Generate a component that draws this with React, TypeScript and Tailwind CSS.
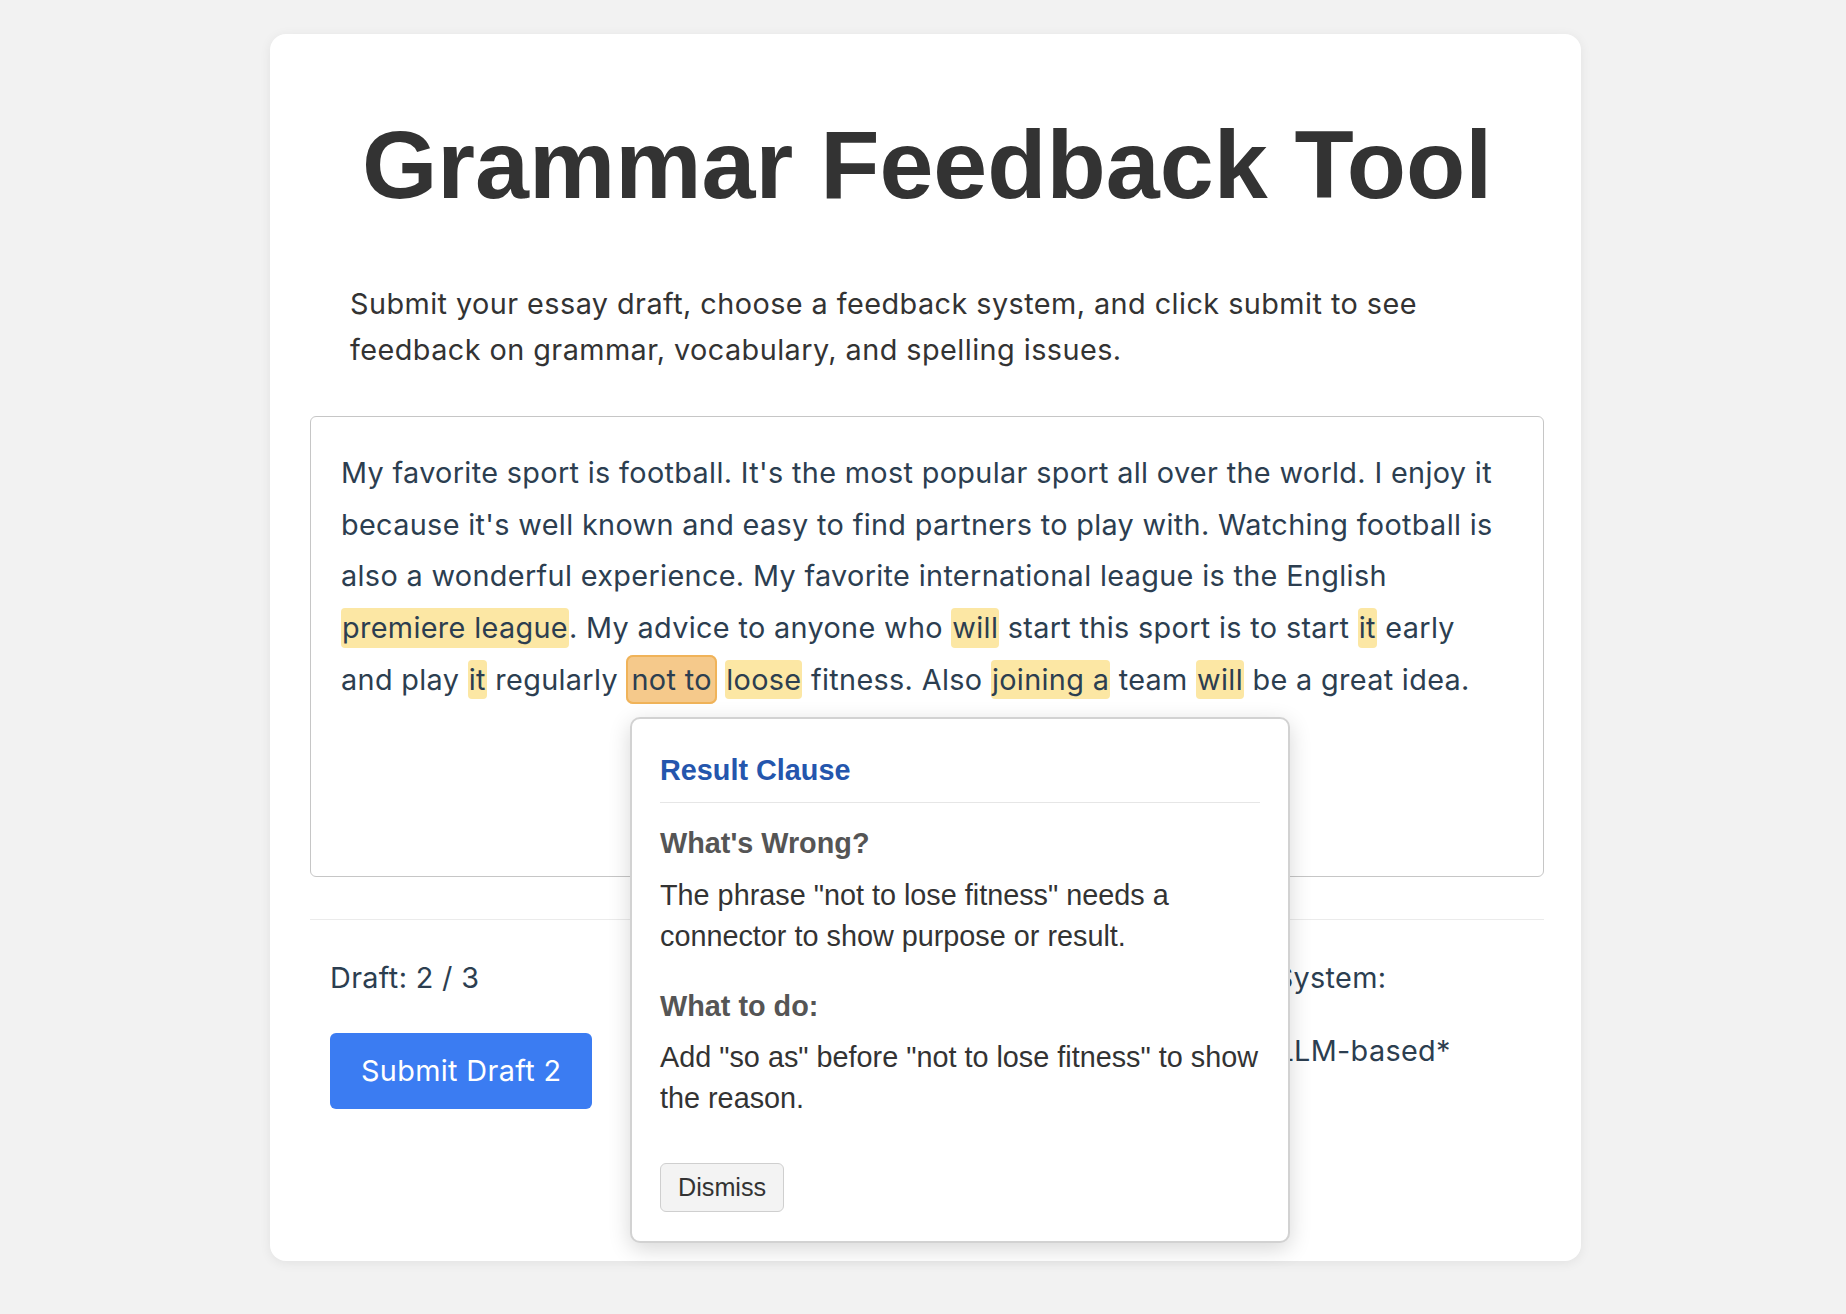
type Mark = "hl" | "active";

type Segment = { text: string; mark?: Mark };

const ESSAY: Segment[] = [
  {
    text: "My favorite sport is football. It's the most popular sport all over the world. I enjoy it because it's well known and easy to find partners to play with. Watching football is also a wonderful experience. My favorite international league is the English ",
  },
  { text: "premiere league", mark: "hl" },
  { text: ". My advice to anyone who " },
  { text: "will", mark: "hl" },
  { text: " start this sport is to start " },
  { text: "it", mark: "hl" },
  { text: " early and play " },
  { text: "it", mark: "hl" },
  { text: " regularly " },
  { text: "not to", mark: "active" },
  { text: " " },
  { text: "loose", mark: "hl" },
  { text: " fitness. Also " },
  { text: "joining a", mark: "hl" },
  { text: " team " },
  { text: "will", mark: "hl" },
  { text: " be a great idea." },
];

function EssaySegment({ seg }: { seg: Segment }) {
  if (seg.mark === "active") {
    return (
      <span className="rounded-[7px] border-2 border-[#f0b359] bg-[#f5c98b] px-[3px] py-[5px]">
        {seg.text}
      </span>
    );
  }
  if (seg.mark === "hl") {
    return <span className="rounded-[4px] bg-[#fce7a4] px-[1px] py-[2.4px]">{seg.text}</span>;
  }
  return <>{seg.text}</>;
}

function Radio({ checked = false }: { checked?: boolean }) {
  return (
    <span className="grid h-[23px] w-[23px] place-items-center rounded-full border-2 border-[#767676] bg-white">
      {checked && <span className="h-[12px] w-[12px] rounded-full bg-[#3b7cf2]" />}
    </span>
  );
}

function FeedbackPopup() {
  return (
    <div className="absolute left-[360px] top-[683px] w-[660px] rounded-[10px] border-2 border-[#d2d2d2] bg-white px-[28px] pb-[29px] pt-[28px] font-[family-name:Liberation_Sans,Arial,sans-serif] tracking-normal shadow-[0_6px_22px_rgba(0,0,0,0.16)]">
      <h3 className="border-b border-[#e6e6e6] pb-[9px] text-[28.8px] font-bold leading-[46px] text-[#2456ad]">
        Result Clause
      </h3>

      <div className="mt-[20px]">
        <h4 className="text-[28.8px] font-bold leading-[41.5px] text-[#555]">What's Wrong?</h4>
        <p className="mt-[10px] text-[28.8px] leading-[41.5px] text-[#333]">
          The phrase "not to lose fitness" needs a connector to show purpose or result.
        </p>
      </div>

      <div className="mt-[28px]">
        <h4 className="text-[28.8px] font-bold leading-[41.5px] text-[#555]">What to do:</h4>
        <p className="mt-[9.5px] text-[28.8px] leading-[41.5px] text-[#333]">
          Add "so as" before "not to lose fitness" to show the reason.
        </p>
      </div>

      <button className="mt-[43.5px] rounded-[6px] border border-[#cfcfcf] bg-[#f3f3f3] px-[17px] py-[9px] text-[25.2px] leading-[29px] text-[#333]">
        Dismiss
      </button>
    </div>
  );
}

export default function App() {
  return (
    <div className="min-h-screen bg-[#f2f2f2] pb-[40px] pl-[5px] pt-[34px] font-[family-name:Inter,sans-serif] tracking-[0.35px]">
      <div className="relative mx-auto w-[1311px] rounded-[16px] bg-white pb-[40px] pl-[40px] pr-[37px] pt-[75px] shadow-[0_2px_12px_rgba(0,0,0,0.07)]">
        <h1 className="text-center font-[family-name:Liberation_Sans,Arial,sans-serif] text-[97px] font-bold leading-[1.15] tracking-normal text-[#333]">
          Grammar Feedback Tool
        </h1>

        <p className="mt-[60px] px-[40px] text-[28.8px] leading-[1.6] tracking-[0.45px] text-[#333]">
          Submit your essay draft, choose a feedback system, and click submit to see feedback on grammar, vocabulary,
          and spelling issues.
        </p>

        <div className="mt-[43px] min-h-[461px] rounded-[6px] border border-[#c6c6c6] p-[30px] text-[28.8px] leading-[1.8] text-[#2c3e50]">
          {ESSAY.map((seg, i) => (
            <EssaySegment key={i} seg={seg} />
          ))}
        </div>

        <div className="mt-[42px] flex justify-between border-t border-[#ebebeb] px-[20px] pb-[112px] pt-[35px] text-[28.8px] leading-[1.6] text-[#2c3e50]">
          <div className="flex flex-col items-start">
            <span>Draft: 2 / 3</span>
            <button className="mt-[32px] rounded-[6px] bg-[#3b7cf2] px-[31px] py-[15px] leading-[46px] text-white">
              Submit Draft 2
            </button>
          </div>

          <div className="flex w-[394px] flex-col">
            <span>Feedback System:</span>
            <div className="mt-[27px] flex items-center">
              <Radio />
              <span className="ml-[8px]">Basic</span>
              <span className="ml-[4px]">
                <Radio checked />
              </span>
              <span className="ml-[14px]">LLM-based*</span>
            </div>
          </div>
        </div>

        <FeedbackPopup />
      </div>
    </div>
  );
}
